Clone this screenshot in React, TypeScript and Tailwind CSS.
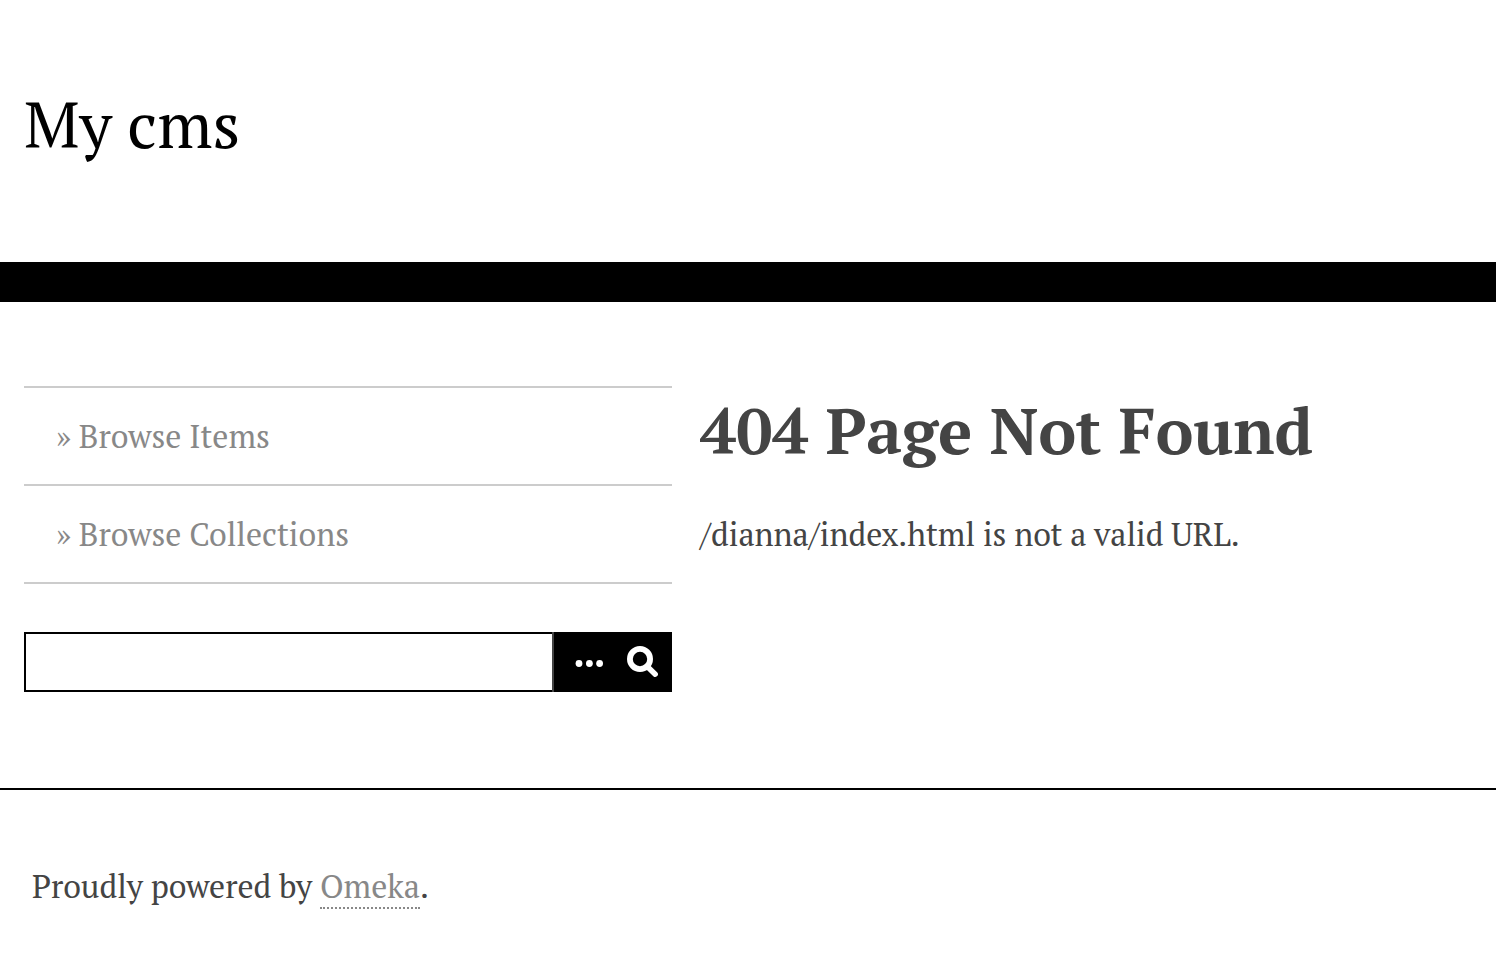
import { useState } from 'react';

const NAV_LINKS = [
  { label: 'Browse Items', href: '#items' },
  { label: 'Browse Collections', href: '#collections' },
];

function DotsIcon() {
  return (
    <svg viewBox="0 0 28 8" className="w-7 h-2" fill="currentColor" aria-hidden="true">
      <circle cx="4" cy="3.5" r="3.4" />
      <circle cx="14.4" cy="3.5" r="3.4" />
      <circle cx="24.6" cy="3.5" r="3.4" />
    </svg>
  );
}

function SearchIcon() {
  return (
    <svg viewBox="0 0 32 32" className="w-8 h-8" fill="none" stroke="currentColor" aria-hidden="true">
      <circle cx="14" cy="13" r="10.1" strokeWidth="5.8" />
      <path d="M21 20.2 29.2 28.2" strokeWidth="5.4" strokeLinecap="round" />
    </svg>
  );
}

function SearchForm() {
  const [query, setQuery] = useState('');

  return (
    <form className="mt-12 flex h-[60px]" onSubmit={e => e.preventDefault()}>
      <input
        type="text"
        aria-label="Search"
        value={query}
        onChange={e => setQuery(e.target.value)}
        className="min-w-0 flex-1 border-2 border-r-0 border-black px-3 outline-none"
      />
      <button
        type="button"
        aria-label="Advanced search"
        className="flex w-[60px] items-center justify-center border-l-2 border-[#444] bg-black pt-1 pl-3 text-white"
      >
        <DotsIcon />
      </button>
      <button type="submit" aria-label="Submit search" className="flex w-[60px] items-center justify-center bg-black text-white">
        <SearchIcon />
      </button>
    </form>
  );
}

export default function App() {
  return (
    <div className="bg-white font-['PT_Serif','Liberation_Serif',serif] text-[32px] leading-12 text-[#444]">
      <header className="border-b-[40px] border-black px-6 pt-20 pb-[94px]">
        <div className="text-[64px] leading-22 text-black">
          <a href="#home">My cms</a>
        </div>
      </header>

      <div className="grid grid-cols-[162fr_193fr] gap-7 px-6 pt-[84px] pb-24">
        <div>
          <nav>
            <ul className="border-t-2 border-[#ccc]">
              {NAV_LINKS.map(link => (
                <li key={link.label} className="border-b-2 border-[#ccc] px-8 py-6 text-[#888]">
                  <a href={link.href}>» {link.label}</a>
                </li>
              ))}
            </ul>
          </nav>
          <SearchForm />
        </div>

        <main>
          <h1 className="text-[64px] leading-22 font-bold">404 Page Not Found</h1>
          <p className="mt-9">/dianna/index.html is not a valid URL.</p>
        </main>
      </div>

      <footer className="border-t-2 border-black px-8 py-[72px]">
        <p>
          Proudly powered by{' '}
          <a href="#omeka" className="border-b-2 border-dotted border-[#888] text-[#888]">Omeka</a>.
        </p>
      </footer>
    </div>
  );
}
